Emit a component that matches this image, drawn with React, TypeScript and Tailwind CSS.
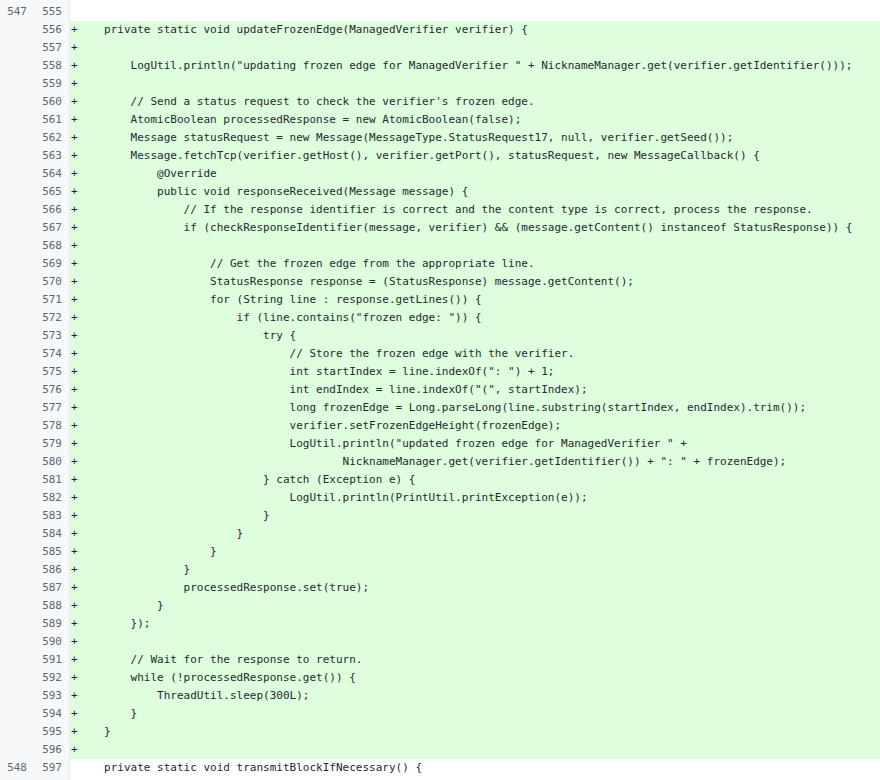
import React from 'react';

type Line = { old?: number; num: number; added: boolean; code: string };

const added: string[] = [
  '    private static void updateFrozenEdge(ManagedVerifier verifier) {',
  '',
  '        LogUtil.println("updating frozen edge for ManagedVerifier " + NicknameManager.get(verifier.getIdentifier()));',
  '',
  "        // Send a status request to check the verifier's frozen edge.",
  '        AtomicBoolean processedResponse = new AtomicBoolean(false);',
  '        Message statusRequest = new Message(MessageType.StatusRequest17, null, verifier.getSeed());',
  '        Message.fetchTcp(verifier.getHost(), verifier.getPort(), statusRequest, new MessageCallback() {',
  '            @Override',
  '            public void responseReceived(Message message) {',
  '                // If the response identifier is correct and the content type is correct, process the response.',
  '                if (checkResponseIdentifier(message, verifier) && (message.getContent() instanceof StatusResponse)) {',
  '',
  '                    // Get the frozen edge from the appropriate line.',
  '                    StatusResponse response = (StatusResponse) message.getContent();',
  '                    for (String line : response.getLines()) {',
  '                        if (line.contains("frozen edge: ")) {',
  '                            try {',
  '                                // Store the frozen edge with the verifier.',
  '                                int startIndex = line.indexOf(": ") + 1;',
  '                                int endIndex = line.indexOf("(", startIndex);',
  '                                long frozenEdge = Long.parseLong(line.substring(startIndex, endIndex).trim());',
  '                                verifier.setFrozenEdgeHeight(frozenEdge);',
  '                                LogUtil.println("updated frozen edge for ManagedVerifier " +',
  '                                        NicknameManager.get(verifier.getIdentifier()) + ": " + frozenEdge);',
  '                            } catch (Exception e) {',
  '                                LogUtil.println(PrintUtil.printException(e));',
  '                            }',
  '                        }',
  '                    }',
  '                }',
  '                processedResponse.set(true);',
  '            }',
  '        });',
  '',
  '        // Wait for the response to return.',
  '        while (!processedResponse.get()) {',
  '            ThreadUtil.sleep(300L);',
  '        }',
  '    }',
  '',
];

const lines: Line[] = [
  { old: 547, num: 555, added: false, code: '' },
  ...added.map((code, i) => ({ num: 556 + i, added: true, code })),
  { old: 548, num: 597, added: false, code: '    private static void transmitBlockIfNecessary() {' },
];

const Gutter = ({ old, num }: { old?: number; num?: number }) => (
  <div className="flex w-[70px] shrink-0 bg-[#f6f8fa] border-r border-[#e8ebef] pr-[7px] text-[#5c6670]">
    <div className="w-[27px] text-right">{old}</div>
    <div className="w-[35px] text-right">{num}</div>
  </div>
);

export default function App() {
  return (
    <div
      className="w-[880px] h-[780px] overflow-hidden bg-white text-[11px] leading-[18px] text-[#24292e]"
      style={{ fontFamily: '"DejaVu Sans Mono", monospace' }}
    >
      <div className="flex h-[3px]">
        <Gutter />
        <div className="flex-1" />
      </div>
      {lines.map((l) => (
        <div key={l.num} className="flex h-[18px]">
          <Gutter old={l.old} num={l.num} />
          <div className={`flex-1 pl-px whitespace-pre ${l.added ? 'bg-[#ddffdd]' : 'bg-white'}`}>
            <span className="text-[#1b2a4a]">{l.added ? '+' : ' '}</span>
            {l.code}
          </div>
        </div>
      ))}
      <div className="flex h-[3px]">
        <Gutter />
        <div className="flex-1" />
      </div>
    </div>
  );
}
